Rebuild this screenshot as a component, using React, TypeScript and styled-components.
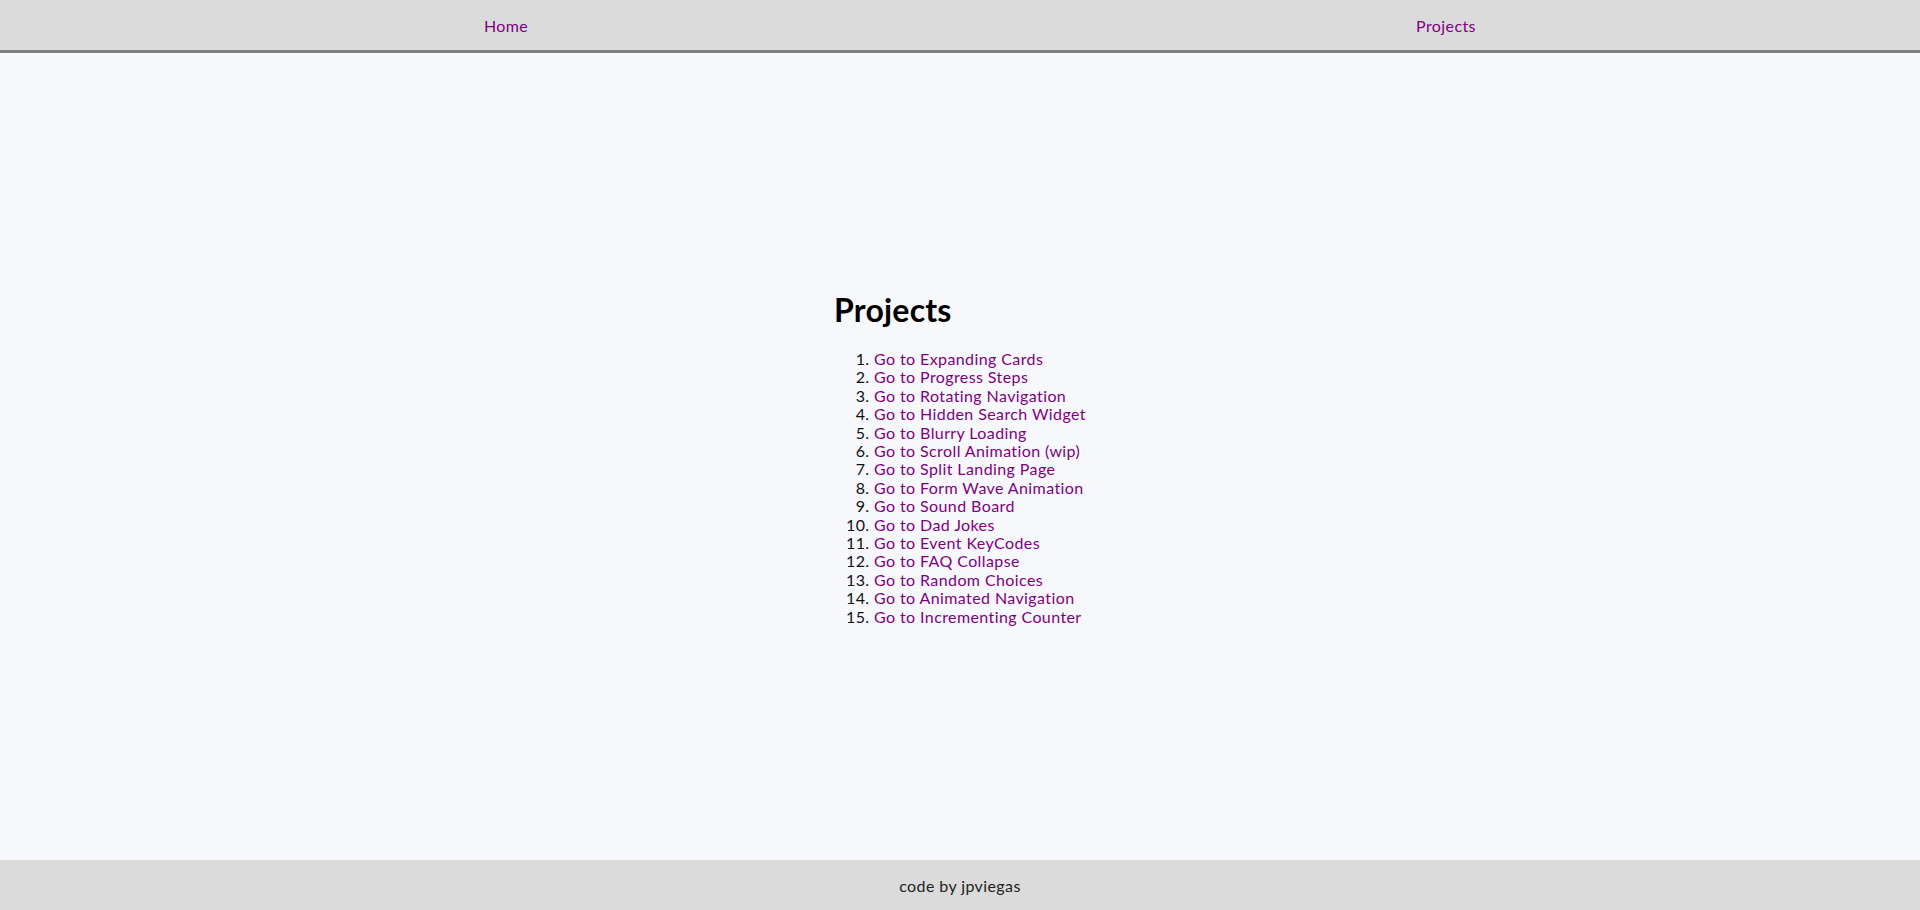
import { FC } from 'react';
import styled, { createGlobalStyle } from 'styled-components';

const projects = [
  'Expanding Cards',
  'Progress Steps',
  'Rotating Navigation',
  'Hidden Search Widget',
  'Blurry Loading',
  'Scroll Animation (wip)',
  'Split Landing Page',
  'Form Wave Animation',
  'Sound Board',
  'Dad Jokes',
  'Event KeyCodes',
  'FAQ Collapse',
  'Random Choices',
  'Animated Navigation',
  'Incrementing Counter',
];

const GlobalStyle = createGlobalStyle`
  html, body {
    margin: 0;
    padding: 0;
    height: 100%;
  }

  body {
    font-family: Lato, 'Open Sans', sans-serif;
    letter-spacing: 0.4px;
    background: #f7f8fc;
    color: #222;
  }

  #root {
    min-height: 100vh;
    display: flex;
    flex-direction: column;
  }
`;

const App: FC = () => {
  return (
    <>
      <GlobalStyle />
      <Header>
        <NavList>
          <NavItem>
            <NavLink href="#">Home</NavLink>
          </NavItem>
          <NavItem>
            <NavLink href="#">Projects</NavLink>
          </NavItem>
        </NavList>
      </Header>
      <Main>
        <Container>
          <Title>Projects</Title>
          <ProjectList>
            {projects.map((name) => (
              <ProjectItem key={name}>
                <ProjectLink href="#">Go to {name}</ProjectLink>
              </ProjectItem>
            ))}
          </ProjectList>
        </Container>
      </Main>
      <Footer>code by jpviegas</Footer>
    </>
  );
};

export default App;

const Header = styled.header`
  height: 50px;
  background: #dbdbdb;
  border-bottom: 3px solid #808080;
  flex-shrink: 0;
`;

const NavList = styled.ul`
  margin: 0;
  padding: 0 4px 0 36px;
  height: 100%;
  list-style: none;
  display: flex;
  align-items: center;
`;

const NavItem = styled.li`
  flex: 1;
  text-align: center;
  font-size: 16px;
`;

const NavLink = styled.a`
  color: #800080;
  text-decoration: none;
`;

const Main = styled.main`
  flex: 1;
  display: flex;
  align-items: center;
  justify-content: center;
`;

const Container = styled.div`
  display: flex;
  flex-direction: column;
  margin-top: -2px;
`;

const Title = styled.h1`
  margin: 21px 0;
  font-size: 32px;
  font-weight: 700;
  letter-spacing: 0.2px;
  color: #000;
`;

const ProjectList = styled.ol`
  margin: 0 0 16px;
  padding-left: 40px;
  font-size: 16px;
`;

const ProjectItem = styled.li`
  line-height: 18.4px;
  color: #111;
`;

const ProjectLink = styled.a`
  color: #800080;
  text-decoration: none;
`;

const Footer = styled.footer`
  height: 50px;
  flex-shrink: 0;
  background: #dbdbdb;
  display: flex;
  align-items: center;
  justify-content: center;
  font-size: 16px;
  color: #222;
`;
